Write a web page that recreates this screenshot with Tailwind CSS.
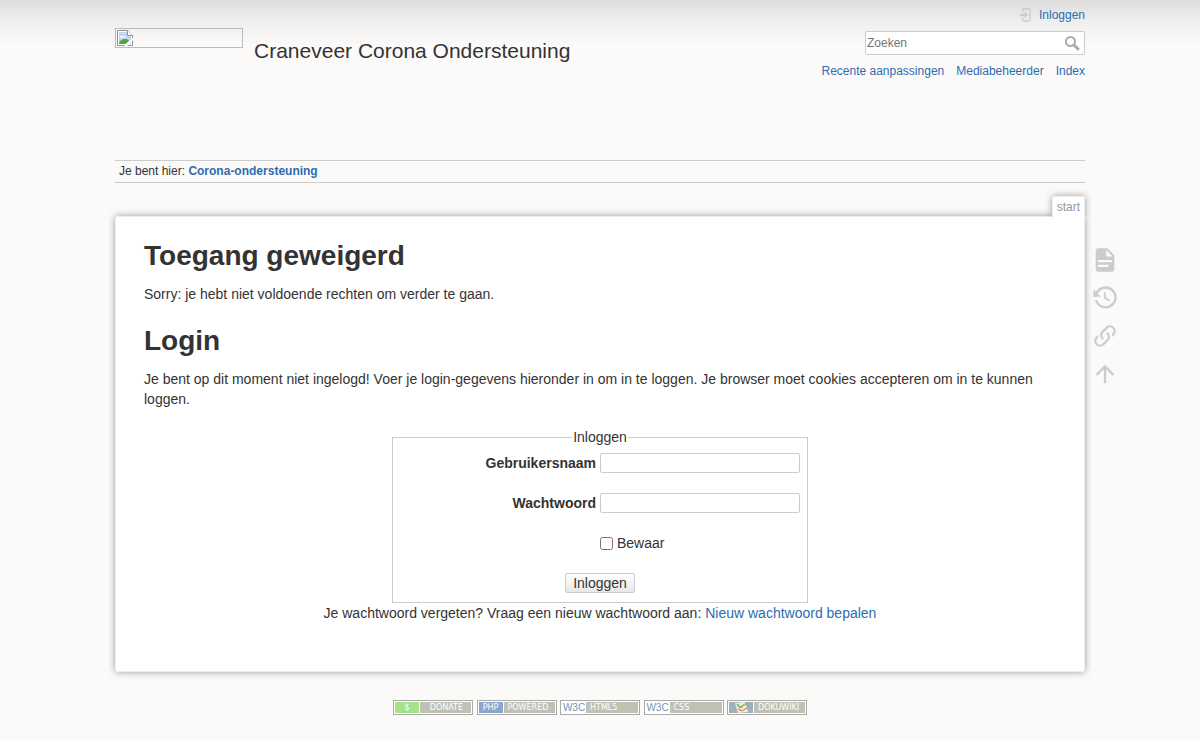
<!DOCTYPE html>
<html lang="nl">
<head>
  <meta charset="UTF-8" />
  <meta name="viewport" content="width=device-width, initial-scale=1" />
  <title>start [Craneveer Corona Ondersteuning]</title>
  <script src="https://cdn.jsdelivr.net/npm/@tailwindcss/browser@4"></script>
</head>
<body class="min-h-screen bg-[#fbfaf9] font-['Liberation_Sans',Arial,sans-serif] text-sm leading-5 text-[#333]">
  <div class="bg-[linear-gradient(to_bottom,#dcdcdc_0,#e2e2e2_6px,#eeeeed_20px,#fbfaf9_46px)]">
    <div class="mx-auto grid max-w-[1200px] grid-cols-[115px_minmax(0,1fr)_115px]">

      <!-- Header -->
      <header class="col-start-2 flex min-h-[160px] justify-between">
        <a href="#" class="flex items-start gap-[11px] pt-7">
          <span class="block h-5 w-32 border border-[#bbb] p-px">
            <svg class="h-4 w-4" viewBox="0 0 16 16" fill="none">
              <path d="M.5.5h10l5 5v10H.5z" fill="#fff" />
              <path d="M2 2h8v4h4v8H2z" fill="#c3d6f6" />
              <path d="M3 7.500c0-2 2-2 2.500-1C6.500 5 8.500 6 8 7.500z" fill="#fff" />
              <path d="M2 14c0-3 3-5 6-5 2 0 3 .5 4 1.500L8.500 14z" fill="#4da53a" />
              <path d="M.5 15.500V.5h10l5 5v10z" stroke="#8f9499" />
              <path d="M10.500.5v5h5" stroke="#8f9499" fill="#fff" />
              <path d="M8 16.500l8.500-8" stroke="#fff" stroke-width="2" />
            </svg>
          </span>
          <span class="pt-2.5 text-[21px] leading-[26px]">Craneveer Corona Ondersteuning</span>
        </a>

        <div class="flex flex-col items-end pt-[5px] text-xs leading-5">
          <a href="#" class="flex items-center gap-[5px] text-[#2f6cb0] hover:underline">
            <svg class="h-4 w-4" viewBox="0 0 24 24" fill="#ccc"><path d="M10 17.250V14H3v-4h7V6.750L15.250 12 10 17.250M8 2h9a2 2 0 0 1 2 2v16a2 2 0 0 1-2 2H8a2 2 0 0 1-2-2v-4h2v4h9V4H8v4H6V4a2 2 0 0 1 2-2z" /></svg>
            Inloggen
          </a>
          <form class="mt-1.5 flex h-6 w-[220px] items-center rounded-xs border border-[#ccc] bg-white pr-1" onsubmit="return false">
            <input type="search" aria-label="Zoeken" placeholder="Zoeken" class="min-w-0 flex-1 px-px outline-none placeholder:text-[#757575]" />
            <button type="submit" aria-label="Zoeken">
              <svg class="h-4 w-4" viewBox="0 0 16 16" fill="none" stroke="#aaa">
                <circle cx="6.500" cy="6.500" r="4.500" stroke-width="2" />
                <path d="M10 10l4 4" stroke-width="3" stroke-linecap="round" />
              </svg>
            </button>
          </form>
          <nav class="mt-1.5 flex gap-3 text-[#2f6cb0]">
            <a href="#" class="hover:underline">Recente aanpassingen</a>
            <a href="#" class="hover:underline">Mediabeheerder</a>
            <a href="#" class="hover:underline">Index</a>
          </nav>
        </div>
      </header>

      <!-- Breadcrumbs -->
      <nav class="col-start-2 border-y border-[#ccc] px-1 text-xs leading-[21px]">
        Je bent hier: <a href="#" class="font-bold text-[#2f6cb0] hover:underline">Corona-ondersteuning</a>
      </nav>

      <!-- Page id tab, cut off at the bottom so it joins the page -->
      <div class="relative z-10 col-start-2 -mr-4 -mb-px justify-self-end overflow-hidden pt-[13px] pr-4 pl-4">
        <div class="rounded-t-xs border border-b-0 border-[#eee] bg-white px-1 text-xs leading-5 text-[#999] shadow-[0_0_7px_#999]">start</div>
      </div>

      <main class="col-start-2 rounded-xs border border-[#eee] bg-white px-7 pt-[22px] pb-12 shadow-[0_0_7px_#999]">
        <h1 class="text-[28px] leading-[34px] font-bold">Toegang geweigerd</h1>
        <p class="mt-[11px]">Sorry: je hebt niet voldoende rechten om verder te gaan.</p>
        <h1 class="mt-5 text-[28px] leading-[34px] font-bold">Login</h1>
        <p class="mt-[11px]">Je bent op dit moment niet ingelogd! Voer je login-gegevens hieronder in om in te loggen. Je browser moet cookies accepteren om in te kunnen loggen.</p>

        <form class="mt-[18px]" onsubmit="return false">
          <fieldset class="mx-auto w-[416px] border border-[#ccc] px-[7px] pt-1.5 pb-[9px]">
            <legend class="mx-auto px-px">Inloggen</legend>
            <div class="flex flex-col gap-5">
              <label class="flex items-center justify-end gap-1 font-bold">
                Gebruikersnaam
                <input type="text" name="u" class="h-5 w-[200px] rounded-xs border border-[#ccc] bg-white px-0.5 font-normal" />
              </label>
              <label class="flex items-center justify-end gap-1 font-bold">
                Wachtwoord
                <input type="password" name="p" class="h-5 w-[200px] rounded-xs border border-[#ccc] bg-white px-0.5 font-normal" />
              </label>
              <label class="flex w-[200px] items-center gap-1 self-end">
                <input type="checkbox" name="r" class="h-[13px] w-[13px]" />
                Bewaar
              </label>
              <button type="submit" class="h-5 self-center rounded-xs border border-[#ccc] bg-linear-to-b from-white to-[#e8e8e8] px-[7px] leading-[18px]">Inloggen</button>
            </div>
          </fieldset>
        </form>
        <p class="text-center">Je wachtwoord vergeten? Vraag een nieuw wachtwoord aan: <a href="#" class="text-[#2f6cb0] hover:underline">Nieuw wachtwoord bepalen</a></p>
      </main>

      <!-- Page tools -->
      <nav class="col-start-3 ml-1.5 flex flex-col gap-2.5 pt-[30px]">
        <a href="#" aria-label="Toon broncode" class="w-7"><svg class="h-7 w-7" viewBox="0 0 24 24" fill="#ccc"><path d="M13 9h5.500L13 3.500V9M6 2h8l6 6v12a2 2 0 0 1-2 2H6a2 2 0 0 1-2-2V4c0-1.110.89-2 2-2m9 16v-2H6v2h9m3-4v-2H6v2h12z" /></svg></a>
        <a href="#" aria-label="Oude revisies" class="w-7"><svg class="h-7 w-7" viewBox="0 0 24 24" fill="#ccc"><path d="M11 7v5.110l4.710 2.790.79-1.280-4-2.370V7m0-5C8.970 2 5.910 3.920 4.270 6.770L2 4.500V11h6.500L5.750 8.250C6.960 5.730 9.500 4 12.500 4a7.500 7.500 0 0 1 7.500 7.500 7.500 7.500 0 0 1-7.500 7.500c-3.270 0-6.030-2.090-7.060-5h-2.100c1.100 4.030 4.770 7 9.160 7 5.240 0 9.500-4.250 9.500-9.500A9.500 9.500 0 0 0 12.500 2z" /></svg></a>
        <a href="#" aria-label="Referenties" class="w-7"><svg class="h-7 w-7" viewBox="0 0 24 24" fill="#ccc"><path d="M10.590 13.410c.41.39.41 1.030 0 1.420-.39.39-1.030.39-1.420 0a5.003 5.003 0 0 1 0-7.070l3.540-3.540a5.003 5.003 0 0 1 7.070 0 5.003 5.003 0 0 1 0 7.070l-1.490 1.490c.01-.82-.12-1.640-.4-2.420l.47-.48a2.982 2.982 0 0 0 0-4.240 2.982 2.982 0 0 0-4.240 0l-3.530 3.530a2.982 2.982 0 0 0 0 4.240m2.820-4.240c.39-.39 1.030-.39 1.420 0a5.003 5.003 0 0 1 0 7.070l-3.540 3.540a5.003 5.003 0 0 1-7.070 0 5.003 5.003 0 0 1 0-7.070l1.490-1.490c-.01.82.12 1.640.4 2.430l-.47.47a2.982 2.982 0 0 0 0 4.240 2.982 2.982 0 0 0 4.240 0l3.530-3.530a2.982 2.982 0 0 0 0-4.240.973.973 0 0 1 0-1.420z" /></svg></a>
        <a href="#" aria-label="Terug naar boven" class="w-7"><svg class="h-7 w-7" viewBox="0 0 24 24" fill="#ccc"><path d="M13 20h-2V8l-5.500 5.500-1.420-1.420L12 4.160l7.920 7.920-1.420 1.420L13 8v12z" /></svg></a>
      </nav>

      <!-- Footer buttons -->
      <footer class="col-start-2 mx-auto mt-7 mb-6 flex w-[414px] justify-between font-['DejaVu_Sans',sans-serif] text-[8px] leading-[11px] text-white">
        <a href="#" class="flex h-[15px] w-20 border border-[#aaa] bg-white p-px">
          <span class="w-6 bg-[#a5e38b] text-center">$</span>
          <span class="ml-px flex-1 bg-[#c0c1b5] pr-2 text-right">DONATE</span>
        </a>
        <a href="#" class="flex h-[15px] w-20 border border-[#aaa] bg-white p-px">
          <span class="w-6 bg-[#8ba6cc] text-center">PHP</span>
          <span class="ml-px flex-1 bg-[#c0c1b5] pl-1">POWERED</span>
        </a>
        <a href="#" class="flex h-[15px] w-20 border border-[#aaa] bg-white p-px">
          <span class="w-6 text-center font-['Liberation_Sans',sans-serif] text-[10px] text-[#6f93ba]">W3C</span>
          <span class="flex-1 bg-[#c0c1b5] pl-1">HTML5</span>
        </a>
        <a href="#" class="flex h-[15px] w-20 border border-[#aaa] bg-white p-px">
          <span class="w-6 text-center font-['Liberation_Sans',sans-serif] text-[10px] text-[#6f93ba]">W3C</span>
          <span class="flex-1 bg-[#c0c1b5] pl-1">CSS</span>
        </a>
        <a href="#" class="flex h-[15px] w-20 border border-[#aaa] bg-white p-px">
          <svg class="h-[11px] w-6" viewBox="0 0 24 11" fill="none">
            <path d="M0 0h24v11H0z" fill="#9eb0ba" />
            <path d="M6 1l10-1 3 10-10 1z" fill="#f3eed6" />
            <path d="M8 2l3 3.500L18 1" stroke="#67b56c" stroke-width="1.500" />
            <path d="M9 7l4 2 5-3" stroke="#d9685b" />
            <path d="M17 1l-6 7" stroke="#e5c66a" />
          </svg>
          <span class="ml-px flex-1 bg-[#c0c1b5] pl-1">DOKUWIKI</span>
        </a>
      </footer>
    </div>
  </div>
</body>
</html>
